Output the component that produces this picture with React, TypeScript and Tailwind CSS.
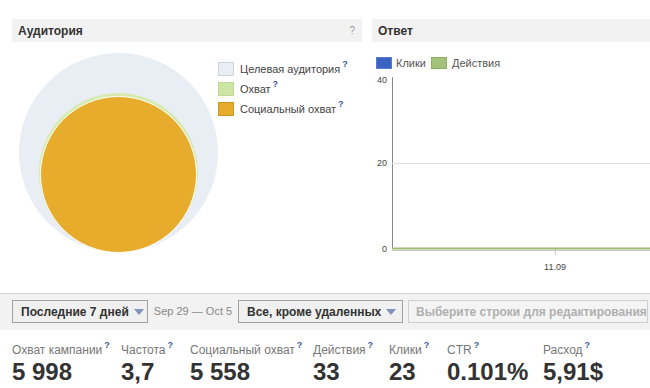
import React from "react";

const Q = ({ c = "text-[#3b5998]" }: { c?: string }) => (
  <span className={`${c} text-[9px] font-bold ml-[2px] relative top-[-5px] leading-none`}>?</span>
);

const stats = [
  { l: "Охват кампании", v: "5 998", w: "w-[109px]" },
  { l: "Частота", v: "3,7", w: "w-[69px]" },
  { l: "Социальный охват", v: "5 558", w: "w-[123px]" },
  { l: "Действия", v: "33", w: "w-[76px]" },
  { l: "Клики", v: "23", w: "w-[58px]" },
  { l: "CTR", v: "0.101%", w: "w-[96px]" },
  { l: "Расход", v: "5,91$", w: "w-[90px]" },
];

const Caret = () => (
  <svg width="10" height="6" viewBox="0 0 10 6" className="ml-[5px] shrink-0">
    <path d="M0 0 L10 0 L5 6 Z" fill="#7f93bc" />
  </svg>
);

export default function App() {
  return (
    <div
      className="w-[650px] h-[388px] overflow-hidden bg-white text-[#333]"
      style={{ fontFamily: "'Liberation Sans', Arial, sans-serif" }}
    >
      <div className="flex pt-[19px]">
        {/* Left panel */}
        <div className="ml-[12px] w-[350px] shrink-0">
          <div className="h-[23px] bg-[#f2f2f2] flex items-center justify-between pl-[6px] pr-[7px]">
            <span className="text-[12px] font-bold text-[#333]">Аудитория</span>
            <span className="text-[10px] text-[#999]">?</span>
          </div>
          <div className="h-[251px] flex">
            <svg width="206" height="251" viewBox="0 0 206 251" className="shrink-0">
              <circle cx="106.5" cy="110.5" r="99.5" fill="#e9edf4" />
              <circle cx="106.5" cy="130.5" r="79.5" fill="#d6eab0" />
              <circle cx="106.5" cy="132.5" r="78" fill="#e8ac2c" stroke="#ffffff" strokeWidth="1" />
            </svg>
            <div className="pt-[20px] flex flex-col gap-[6px] text-[11px] text-[#444]">
              {[
                { t: "Целевая аудитория", c: "bg-[#e9edf4] border-[#cfd4dc]" },
                { t: "Охват", c: "bg-[#cce6a4] border-[#c0d49c]" },
                { t: "Социальный охват", c: "bg-[#e8ac2c] border-[#c9962a]" },
              ].map((r) => (
                <div key={r.t} className="flex items-center h-[14px] whitespace-nowrap">
                  <span className={`inline-block w-[16px] h-[14px] border ${r.c} mr-[6px]`} />
                  <span>{r.t}</span>
                  <Q />
                </div>
              ))}
            </div>
          </div>
        </div>
        {/* Right panel */}
        <div className="ml-[10px] w-[300px] shrink-0">
          <div className="h-[23px] bg-[#f2f2f2] flex items-center pl-[6px]">
            <span className="text-[12px] font-bold text-[#333]">Ответ</span>
          </div>
          <div className="h-[251px] flex flex-col">
            <div className="flex items-center pt-[15px] pl-[4px] text-[11px] text-[#555] h-[27px]">
              <span className="inline-block w-[16px] h-[12px] bg-[#3a61c4] border border-[#5b7cc9] mr-[4px]" />
              <span>Клики</span>
              <span className="inline-block w-[16px] h-[12px] bg-[#a2c279] border border-[#8fb064] ml-[5px] mr-[5px]" />
              <span>Действия</span>
            </div>
            <svg width="300" height="224" viewBox="0 0 300 224" className="shrink-0">
              <g style={{ fontFamily: "'Liberation Sans', Arial, sans-serif" }} fontSize="9" fill="#444">
                <text x="15" y="14" textAnchor="end">40</text>
                <text x="15" y="97" textAnchor="end">20</text>
                <text x="15" y="183" textAnchor="end">0</text>
                <text x="183" y="201" textAnchor="middle">11.09</text>
              </g>
              <line x1="20.5" y1="8" x2="20.5" y2="180" stroke="#888" strokeWidth="1" />
              <line x1="20" y1="94.5" x2="300" y2="94.5" stroke="#ddd" strokeWidth="1" />
              <line x1="183.5" y1="180" x2="183.5" y2="186" stroke="#ccc" strokeWidth="1" />
              <line x1="20" y1="181.5" x2="300" y2="181.5" stroke="#c8c8c8" strokeWidth="1" />
              <line x1="20" y1="179.5" x2="300" y2="179.5" stroke="#9dbb6c" strokeWidth="2" />
            </svg>
          </div>
        </div>
      </div>

      {/* Toolbar */}
      <div className="border-t border-[#d0d0d0] bg-[#f2f2f2] h-[37px] flex items-start pt-[6px] pl-[12px] whitespace-nowrap">
        <div className="h-[23px] border border-[#a0a0a0] bg-[#f0f0f0] flex items-center px-[8px] text-[12px] font-bold text-[#333] w-[136px] shrink-0">
          <span>Последние 7 дней</span>
          <Caret />
        </div>
        <span className="h-[23px] w-[90px] shrink-0 flex items-center justify-center text-[11px] text-[#888]">Sep 29 — Oct 5</span>
        <div className="h-[23px] border border-[#a0a0a0] bg-[#f0f0f0] flex items-center px-[8px] text-[12px] font-bold text-[#333] w-[165px] shrink-0">
          <span>Все, кроме удаленных</span>
          <Caret />
        </div>
        <div className="ml-[5px] h-[23px] border border-[#cfcfcf] bg-[#f4f4f4] flex items-center px-[7px] text-[12px] font-bold text-[#b0b0b0] w-[240px] shrink-0">
          <span>Выберите строки для редактирования</span>
        </div>
      </div>

      {/* Stats */}
      <div className="flex pl-[12px] pt-[12px]">
        {stats.map((s) => (
          <div key={s.l} className={`${s.w} shrink-0 flex flex-col`}>
            <div className="text-[12px] text-[#777] h-[16px] flex items-center leading-[16px] whitespace-nowrap">
              <span>{s.l}</span>
              <Q />
            </div>
            <div className="text-[24px] font-bold text-[#333] leading-[28px] whitespace-nowrap">
              {s.v}
            </div>
          </div>
        ))}
      </div>
    </div>
  );
}
